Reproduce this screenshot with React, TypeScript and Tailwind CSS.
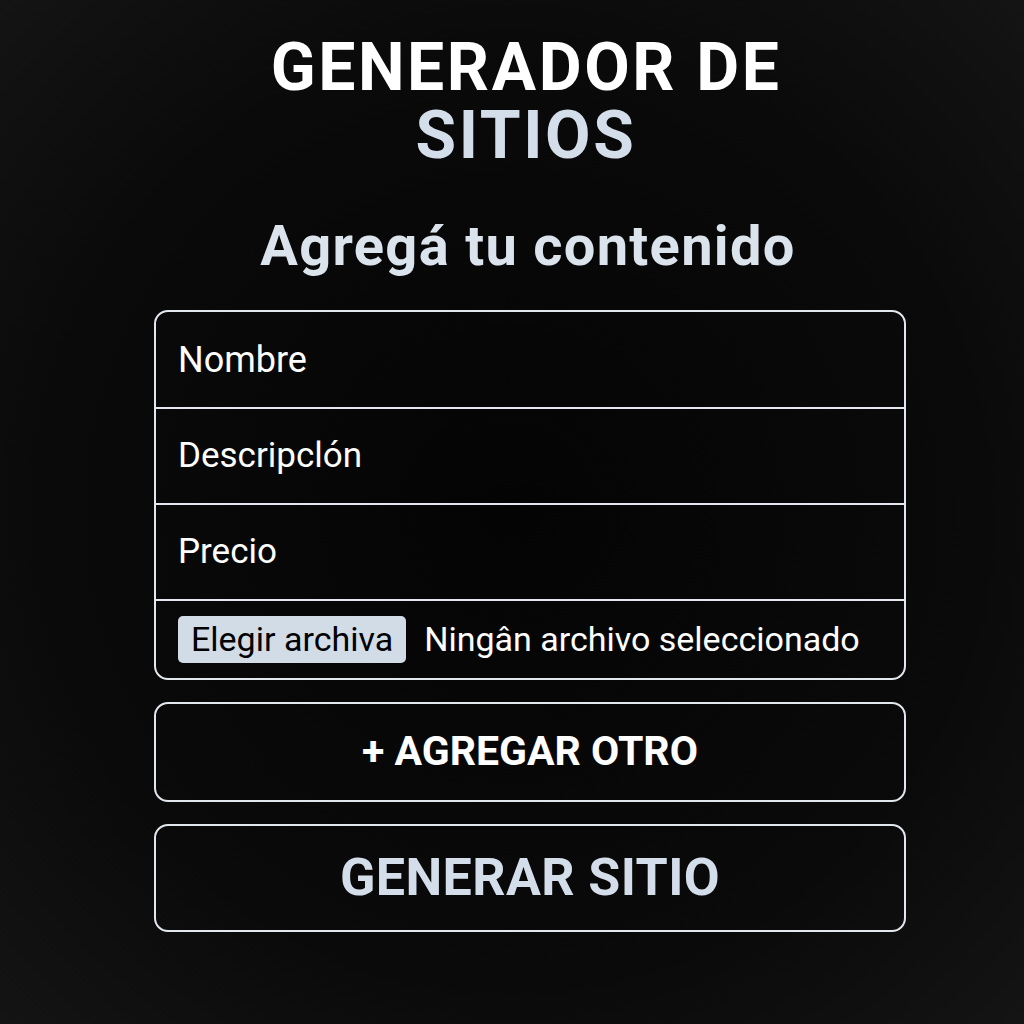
import React from "react";

export default function App() {
  return (
    <div
      className="w-[1024px] h-[1024px] flex flex-col items-center bg-[radial-gradient(ellipse_at_center,#040404_0%,#0a0a0a_65%,#141414_100%)] text-white"
      style={{ fontFamily: "Roboto, 'Noto Sans', sans-serif" }}
    >
      <h1 className="mt-[34px] ml-[28px] text-center font-bold text-[66px] leading-[68px] tracking-[2.6px]">
        <span className="block text-white">GENERADOR DE</span>
        <span className="block text-[#d3deea]">SITIOS</span>
      </h1>
      <h2 className="mt-[46px] ml-[32px] text-[56px] leading-[60px] font-bold text-[#dbe3ec] tracking-[1.3px]">
        Agregá tu contenido
      </h2>
      <div className="mt-[34px] w-[752px] ml-[36px] flex flex-col gap-[22px]">
        <div className="border-2 border-[#e3e8ee] rounded-[14px] overflow-hidden">
          <div className="h-[97px] flex items-center px-[22px] border-b-2 border-[#e3e8ee] text-[36px]">Nombre</div>
          <div className="h-[96px] flex items-center px-[22px] border-b-2 border-[#e3e8ee] text-[35px]">Descripclón</div>
          <div className="h-[96px] flex items-center px-[22px] border-b-2 border-[#e3e8ee] text-[35px]">Precio</div>
          <div className="h-[77px] flex items-center px-[22px] gap-[18px] text-[34px]">
            <span className="bg-[#d2dce7] text-black rounded-[5px] px-[13px] h-[47px] flex items-center tracking-[0px]">Elegir archiva</span>
            <span className="text-white tracking-[0px]">Ningân archivo seleccionado</span>
          </div>
        </div>
        <button className="h-[100px] border-2 border-[#e3e8ee] rounded-[14px] font-bold text-[41px] text-white tracking-[0px]">
          + AGREGAR OTRO
        </button>
        <button className="h-[108px] border-2 border-[#e3e8ee] rounded-[14px] font-bold text-[52px] text-[#d3deea] tracking-[0.4px]">
          GENERAR SITIO
        </button>
      </div>
    </div>
  );
}
